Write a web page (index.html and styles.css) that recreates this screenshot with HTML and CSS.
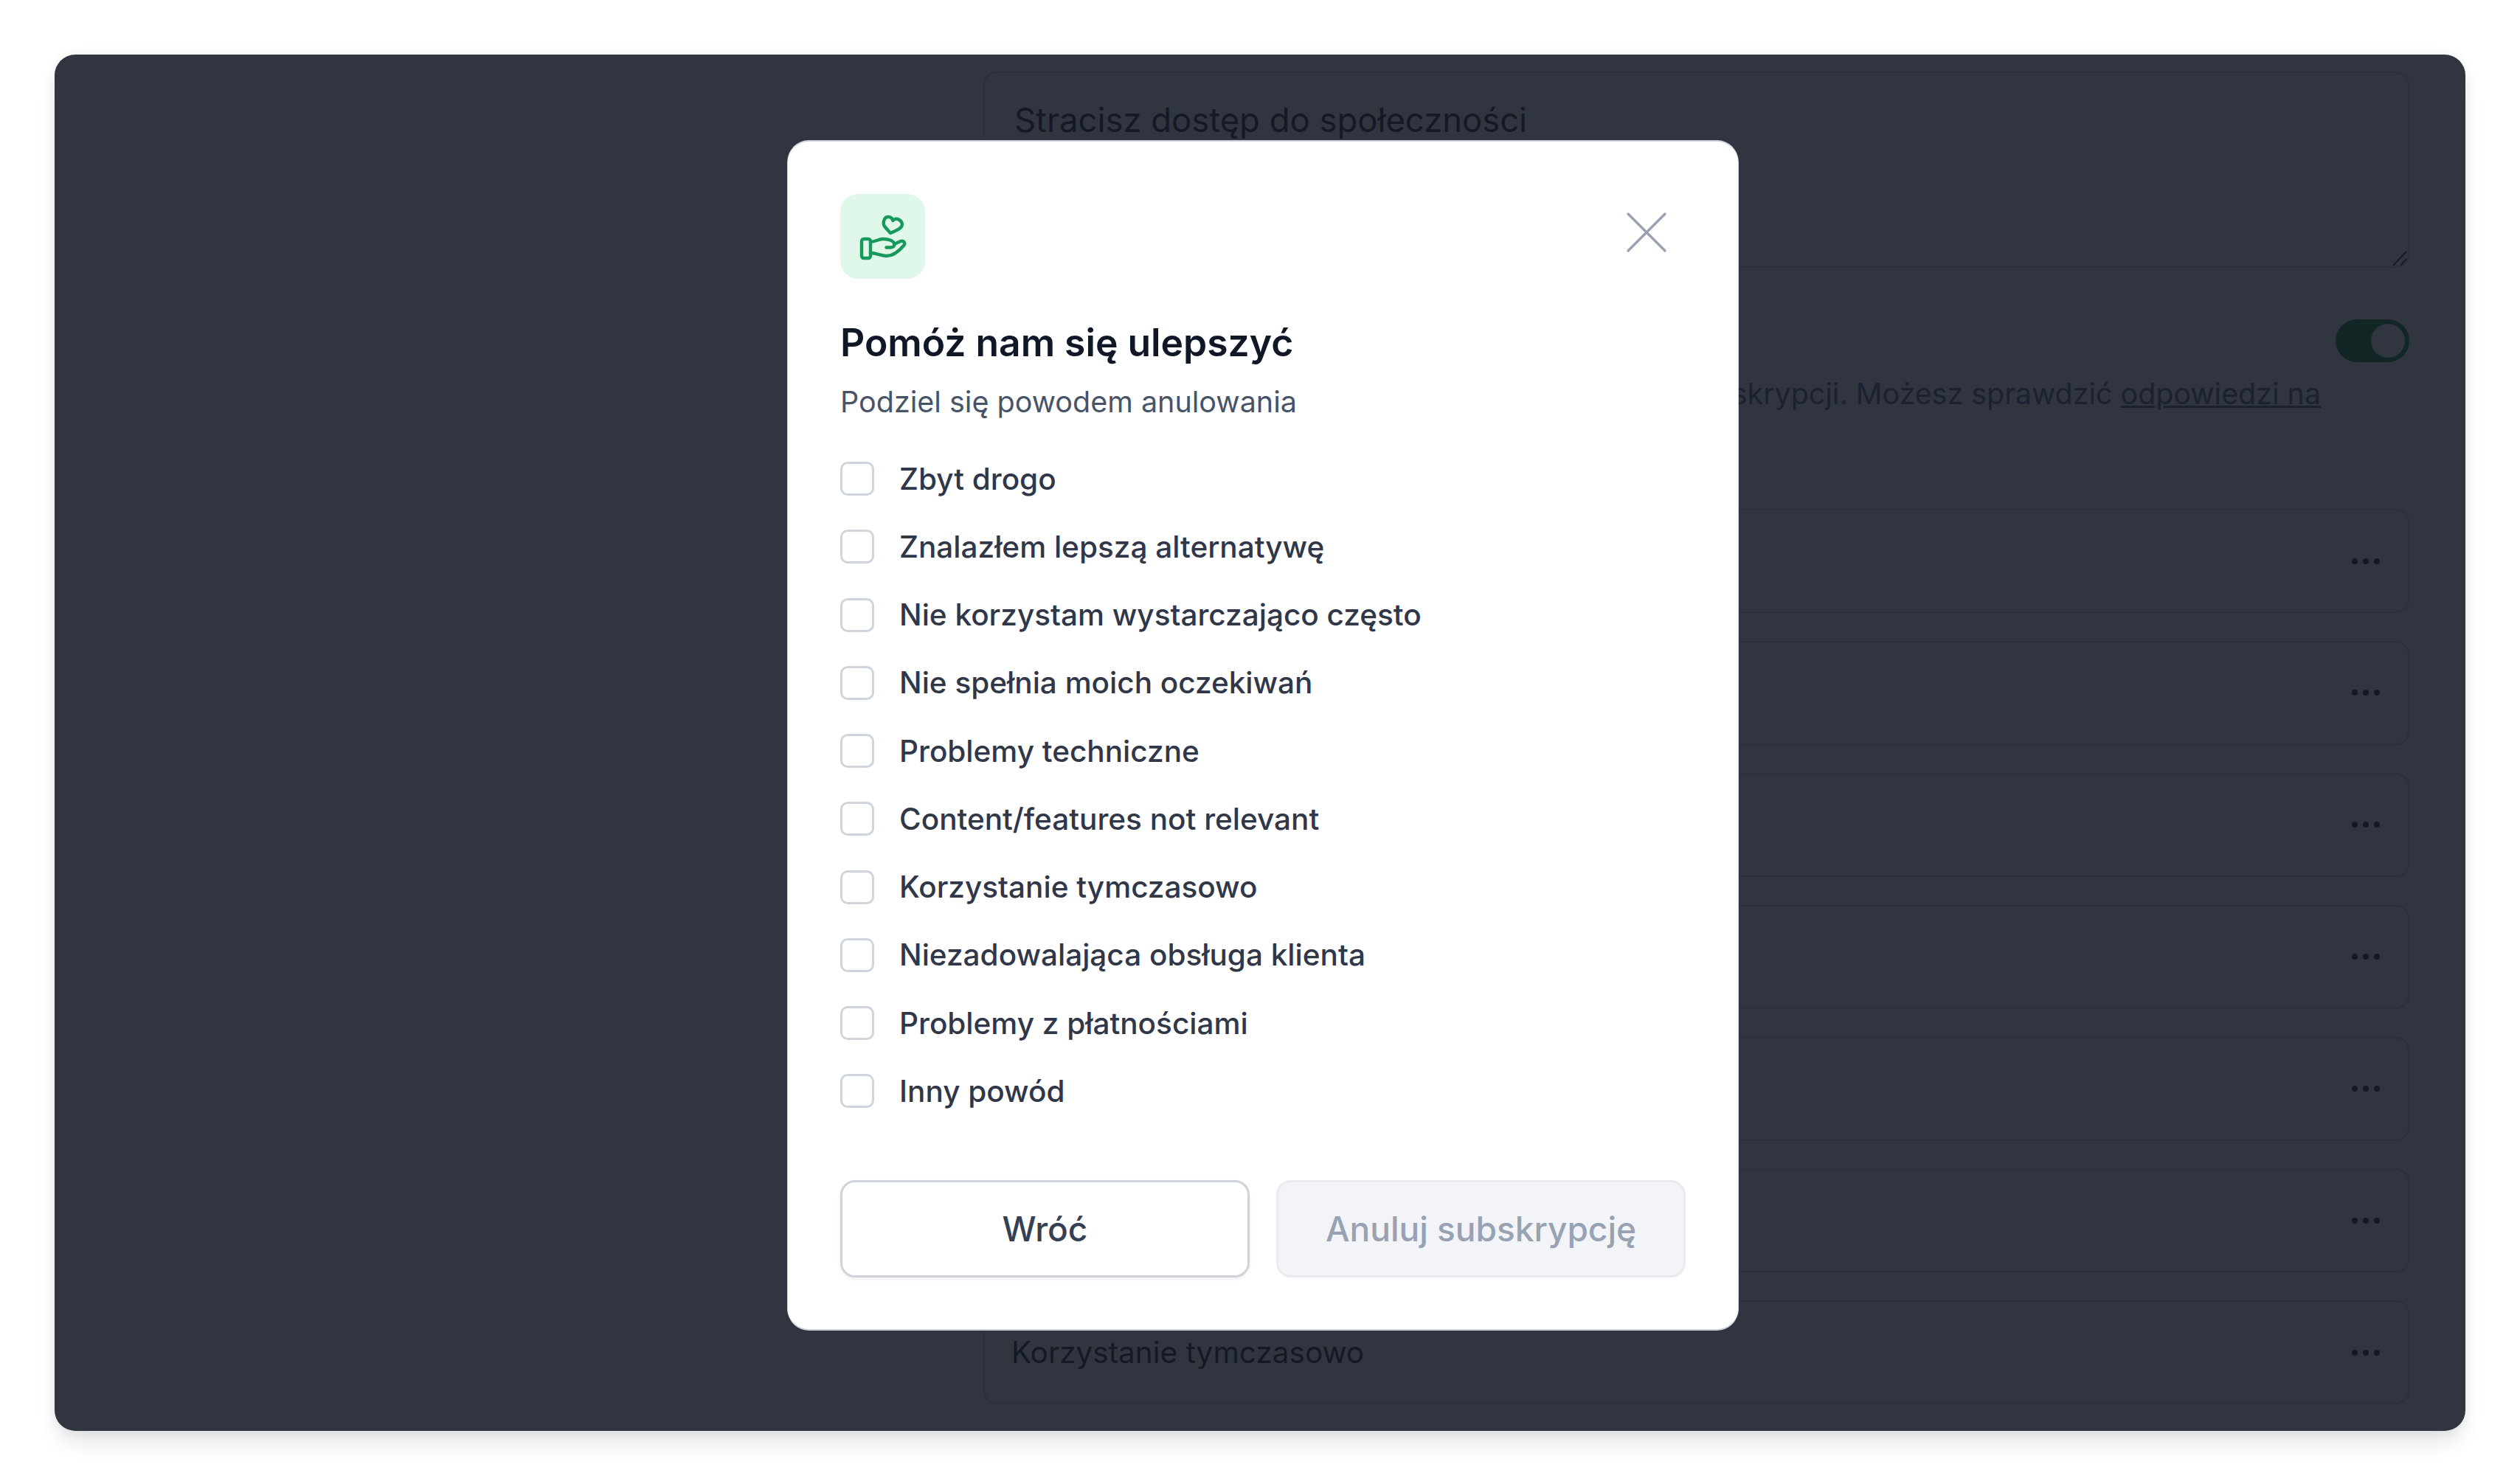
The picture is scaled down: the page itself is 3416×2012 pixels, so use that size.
FILE: index.html
```html
<!DOCTYPE html>
<html lang="pl">
<head>
  <meta charset="UTF-8">
  <meta name="viewport" content="width=device-width, initial-scale=1.0">
  <title>Anuluj subskrypcję</title>
  <link rel="stylesheet" href="styles.css">
</head>
<body>
  <div class="window">
    <!-- page behind the dialog -->
    <div class="page">
      <div class="textarea">
        <span>Stracisz dostęp do społeczności</span>
        <svg class="resize" width="22" height="22" viewBox="0 0 22 22"><path d="M2 21 20 2M12 21l8-9"/></svg>
      </div>
      <div class="switch-row"><span class="switch"><span class="knob"></span></span></div>
      <p class="hint">subskrypcji. Możesz sprawdzić <u>odpowiedzi na</u></p>
      <div class="rows">
        <div class="row"><span></span><b class="dots"></b></div>
        <div class="row"><span></span><b class="dots"></b></div>
        <div class="row"><span></span><b class="dots"></b></div>
        <div class="row"><span></span><b class="dots"></b></div>
        <div class="row"><span></span><b class="dots"></b></div>
        <div class="row"><span></span><b class="dots"></b></div>
        <div class="row"><span>Korzystanie tymczasowo</span><b class="dots"></b></div>
      </div>
    </div>

    <div class="modal">
      <div class="modal-head">
        <div class="modal-icon">
          <svg width="72" height="72" viewBox="0 0 72 72" fill="none" stroke="#16995b" stroke-width="4.400" stroke-linecap="round" stroke-linejoin="round">
            <path d="M46 31 38.500 22.500C35 18 37 9 43 9c3 0 5.500 2 6.500 5 1.500-2 4.500-3 7.500-1.500 5 2.500 6.500 7.500 3 11-4 3.500-9 5.500-14 7.500z"/>
            <rect x="7" y="39" width="12" height="26" rx="3"/>
            <path d="M19 43c6 0 11-4 17-4 7 0 15 2 15.500 7.500 0 2.500-2.500 4-5.500 4h-5.500"/>
            <path d="M51 46l9-4c4-1.500 7 3 4 6-6 7-14 14-23 14-8 0-13-4-22-4"/>
          </svg>
        </div>
        <button class="close" aria-label="Zamknij">
          <svg width="56" height="56" viewBox="0 0 56 56" fill="none" stroke="#9aa2b1" stroke-width="3.400" stroke-linecap="round"><path d="M3 3 53 53M53 3 3 53"/></svg>
        </button>
      </div>
      <h2 class="modal-title">Pomóż nam się ulepszyć</h2>
      <p class="modal-sub">Podziel się powodem anulowania</p>
      <ul class="reasons">
        <li><span class="check"></span>Zbyt drogo</li>
        <li><span class="check"></span>Znalazłem lepszą alternatywę</li>
        <li><span class="check"></span>Nie korzystam wystarczająco często</li>
        <li><span class="check"></span>Nie spełnia moich oczekiwań</li>
        <li><span class="check"></span>Problemy techniczne</li>
        <li><span class="check"></span>Content/features not relevant</li>
        <li><span class="check"></span>Korzystanie tymczasowo</li>
        <li><span class="check"></span>Niezadowalająca obsługa klienta</li>
        <li><span class="check"></span>Problemy z płatnościami</li>
        <li><span class="check"></span>Inny powód</li>
      </ul>
      <div class="modal-actions">
        <button class="btn btn-back">Wróć</button>
        <button class="btn btn-cancel" disabled>Anuluj subskrypcję</button>
      </div>
    </div>
  </div>
</body>
</html>
```

FILE: styles.css
```css
html, body {
  margin: 0;
  height: 100%;
}

body {
  box-sizing: border-box;
  padding: 74px;
  background: #fff;
  font-family: Inter, "Liberation Sans", sans-serif;
}

.window {
  position: relative;
  box-sizing: border-box;
  height: 1866px;
  background: #313540;
  border-radius: 28px;
  box-shadow: 0 20px 28px -6px rgba(16, 24, 40, 0.12), 0 0 16px rgba(16, 24, 40, 0.06);
}

/* page behind the dialog */
.page {
  box-sizing: border-box;
  height: 100%;
  padding: 23px 76px 0 1259px;
  overflow: hidden;
  color: #151925;
  font-size: 40.5px;
}

.textarea {
  position: relative;
  box-sizing: border-box;
  height: 266px;
  padding: 36px 40px;
  border: 2px solid #2c303a;
  border-radius: 18px;
  font-size: 45.4px;
}

.resize {
  position: absolute;
  right: 0;
  bottom: 0;
  fill: none;
  stroke: #181c28;
  stroke-width: 2;
}

.switch-row {
  display: flex;
  justify-content: flex-end;
  margin-top: 70px;
}

.switch {
  display: flex;
  justify-content: flex-end;
  box-sizing: border-box;
  width: 100px;
  height: 58px;
  padding: 6px;
  background: #122625;
  border-radius: 29px;
}

.knob {
  width: 46px;
  height: 46px;
  border-radius: 50%;
  background: #313540;
}

.hint {
  margin: 13px 0 0;
  padding-right: 120px;
  text-align: right;
  white-space: nowrap;
  font-size: 39.4px;
  line-height: 60px;
  color: #1c2130;
}

.rows {
  display: flex;
  flex-direction: column;
  gap: 37.9px;
  margin-top: 126px;
}

.row {
  display: flex;
  justify-content: space-between;
  align-items: center;
  box-sizing: border-box;
  height: 141px;
  padding: 0 36px;
  border: 2px solid #2c303a;
  border-radius: 18px;
}

.dots {
  width: 8px;
  height: 8px;
  margin-right: 17px;
  border-radius: 50%;
  background: #151925;
  box-shadow: -15px 0 #151925, 15px 0 #151925;
}

/* dialog */
.modal {
  position: absolute;
  top: 118px;
  left: 994px;
  box-sizing: border-box;
  width: 1288px;
  height: 1610px;
  padding: 71px;
  background: #fff;
  border-radius: 28px;
  box-shadow: 0 0 0 1px #cdd2dc, 0 -2px 0 #cdd2dc, 0 2px 0 #cdd2dc;
}

.modal-head {
  display: flex;
  justify-content: space-between;
  align-items: flex-start;
}

.modal-icon {
  display: flex;
  align-items: center;
  justify-content: center;
  width: 115px;
  height: 115px;
  background: #dff8e9;
  border-radius: 24px;
}

.close {
  display: flex;
  margin: 24px 25px 0 0;
  padding: 0;
  border: none;
  background: none;
}

.modal-title {
  margin: 54px 0 0;
  font-size: 51.6px;
  line-height: 64px;
  font-weight: 600;
  color: #101828;
}

.modal-sub {
  margin: 19px 0 0;
  font-size: 39.5px;
  line-height: 60px;
  color: #475467;
}

.reasons {
  margin: 28px 0 0;
  padding: 0;
  list-style: none;
}

.reasons li {
  display: flex;
  align-items: center;
  height: 92.25px;
  font-size: 40.5px;
  font-weight: 500;
  color: #2f3749;
}

.check {
  box-sizing: border-box;
  width: 46px;
  height: 46px;
  margin-right: 34px;
  border: 3px solid #d0d5dd;
  border-radius: 10px;
  background: #fff;
}

.modal-actions {
  display: flex;
  gap: 36px;
  margin-top: 74px;
}

.btn {
  flex: 1;
  height: 132px;
  border-radius: 20px;
  font-family: inherit;
  font-size: 46px;
  font-weight: 500;
}

.btn-back {
  background: #fff;
  border: 3px solid #cfd4dc;
  color: #344054;
  box-shadow: 0 2px 4px rgba(16, 24, 40, 0.08);
}

.btn-cancel {
  background: #f2f4f7;
  border: 3px solid #e9ebf0;
  color: #98a2b3;
}
```
